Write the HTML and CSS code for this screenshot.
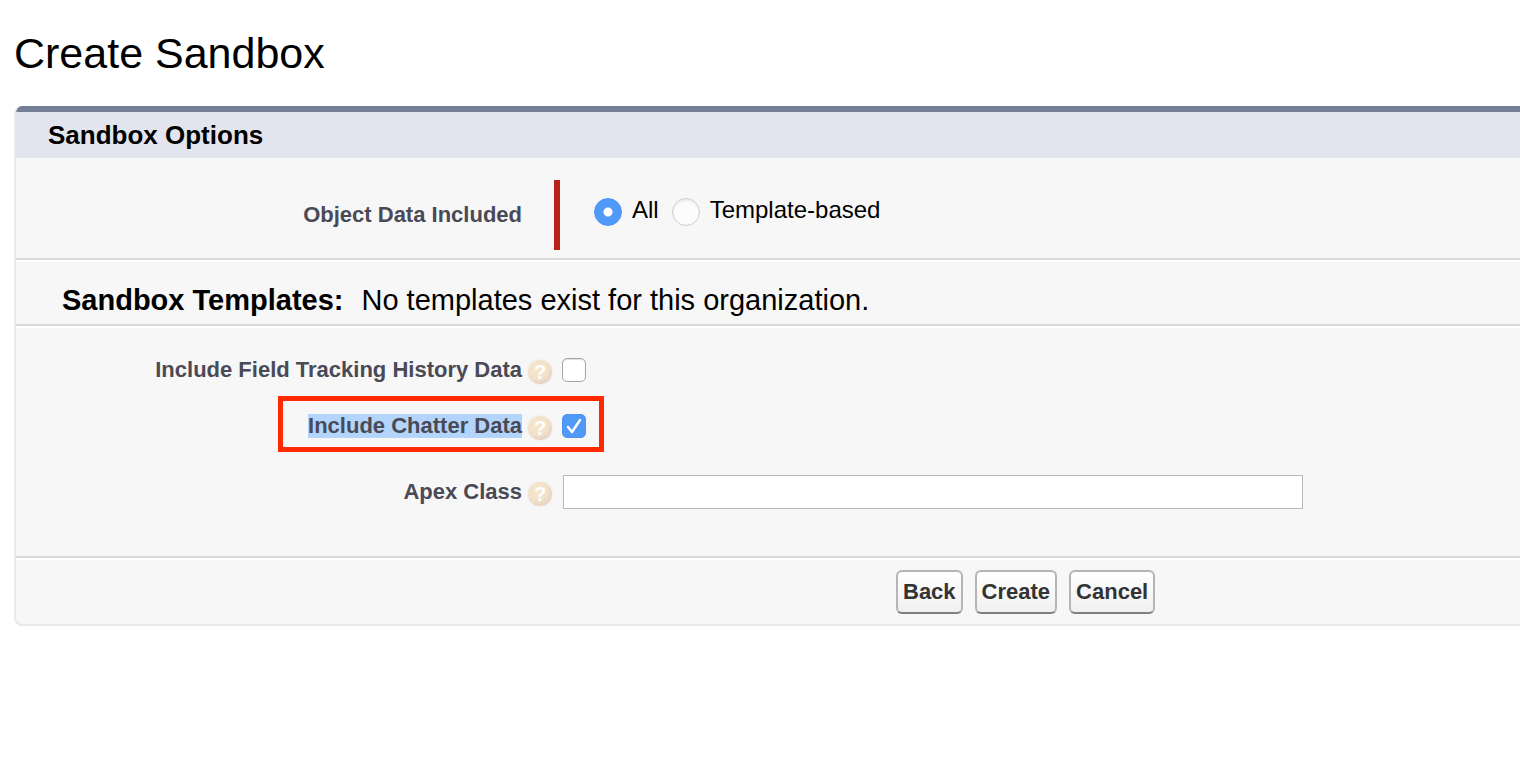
FILE: index.html
```html
<!DOCTYPE html>
<html lang="en">
<head>
<meta charset="utf-8">
<title>Create Sandbox</title>
<link rel="stylesheet" href="styles.css">
</head>
<body>
<main class="page">
  <h1 class="page-title">Create Sandbox</h1>
  <form class="card">
    <h2 class="card-header">Sandbox Options</h2>

    <div class="section object-data" role="radiogroup" aria-labelledby="object-data-label">
      <span class="label" id="object-data-label">Object Data Included</span>
      <div class="required">
        <input class="radio" type="radio" name="data" id="data-all" checked>
        <label class="choice" for="data-all">All</label>
        <input class="radio" type="radio" name="data" id="data-template">
        <label class="choice" for="data-template">Template-based</label>
      </div>
    </div>

    <div class="section templates">
      <h3 class="templates-title">Sandbox Templates:</h3>
      <p class="templates-text">No templates exist for this organization.</p>
    </div>

    <div class="section fields">
      <div class="row">
        <label class="label" for="history">Include Field Tracking History Data</label>
        <button class="help" type="button">?</button>
        <input class="checkbox" type="checkbox" id="history">
      </div>
      <div class="row">
        <label class="label" for="chatter"><mark class="selected">Include Chatter Data</mark></label>
        <button class="help" type="button">?</button>
        <input class="checkbox" type="checkbox" id="chatter" checked>
        <span class="callout"></span>
      </div>
      <div class="row row-apex">
        <label class="label" for="apex">Apex Class</label>
        <button class="help" type="button">?</button>
        <input class="textbox" type="text" id="apex">
      </div>
    </div>

    <div class="actions">
      <button class="btn" type="button">Back</button>
      <button class="btn" type="button">Create</button>
      <button class="btn" type="button">Cancel</button>
    </div>
  </form>
</main>
</body>
</html>
```

FILE: styles.css
```css
* {
  box-sizing: border-box;
}

body {
  margin: 0;
  background: #fff;
  color: #000;
  font-family: "Liberation Sans", Arial, Helvetica, sans-serif;
}

h1, h2, h3, p {
  margin: 0;
}

.page {
  padding: 28px 0 0 14px;
}

.page-title {
  margin-bottom: 28px;
  font-size: 43px;
  font-weight: 400;
  line-height: 50px;
}

.card {
  overflow: hidden;
  border: 2px solid #e9e9e9;
  border-top: 0;
  border-right: 0;
  border-radius: 8px 0 0 8px;
  background: #f7f7f7;
}

.card-header {
  padding: 8px 32px;
  border-top: 6px solid #747e96;
  background: #e3e5ee;
  font-size: 26px;
  line-height: 30px;
}

.section {
  border-bottom: 2px solid #d9d9d9;
  box-shadow: 0 2px 0 #fff;
}

.label {
  width: 506px;
  flex: none;
  color: #4a4a56;
  font-size: 22px;
  font-weight: 700;
  line-height: 24px;
  text-align: right;
}

.object-data {
  display: flex;
  align-items: center;
  gap: 32px;
  padding: 22px 0 8px;
}

.required {
  display: flex;
  align-items: center;
  height: 70px;
  padding: 0 0 6px 34px;
  border-left: 6px solid #ba2119;
}

.choice {
  margin: 0 13px 4px 10px;
  font-size: 24px;
  line-height: 28px;
}

.radio {
  appearance: none;
  width: 28px;
  height: 28px;
  margin: 0;
  border: 1px solid #cfcfcf;
  border-radius: 50%;
  background: #fcfcfc;
  box-shadow: inset 0 2px 2px #ececec;
}

.radio:checked {
  border-color: #4d94f4;
  background: radial-gradient(circle, #fff 0 4px, #5199f7 5px);
  box-shadow: none;
}

.templates {
  display: flex;
  align-items: baseline;
  gap: 18px;
  padding: 23px 46px 7px;
  font-size: 29px;
  line-height: 34px;
}

.templates-title {
  font-size: 29px;
}

.fields {
  display: flex;
  flex-direction: column;
  gap: 32px;
  padding: 32px 0 47px;
}

.row {
  position: relative;
  display: flex;
  align-items: center;
  height: 24px;
}

.row-apex {
  height: 34px;
  margin-top: 5px;
}

.selected {
  display: inline-block;
  background: #b4d5fb;
  color: inherit;
}

.help {
  width: 24px;
  height: 24px;
  flex: none;
  margin: 4px 10px 0 6px;
  padding: 0;
  border: 0;
  border-radius: 50%;
  background: radial-gradient(circle at 42% 38%, #f6e7ca 0, #f2e2cb 45%, #e6d3c0 75%, #d9c4b4 100%);
  box-shadow: 0 0 2px #e6dace;
  color: #fff;
  font: 700 20px/24px "Liberation Sans", Arial, sans-serif;
}

.checkbox {
  appearance: none;
  width: 24px;
  height: 24px;
  margin: 0;
  border: 1px solid #a6a6a6;
  border-radius: 5px;
  background: #fff;
  box-shadow: inset 0 1px 1px #ddd;
}

.checkbox:checked {
  border-color: #4d94f4;
  background: #5199f7 url("data:image/svg+xml,%3Csvg xmlns='http://www.w3.org/2000/svg' viewBox='0 0 22 22'%3E%3Cpath d='M5 12l4 5 8-12' fill='none' stroke='white' stroke-width='2.5' stroke-linecap='round' stroke-linejoin='round'/%3E%3C/svg%3E") center / 22px 22px no-repeat;
  box-shadow: none;
}

.callout {
  position: absolute;
  top: -18px;
  left: 262px;
  width: 326px;
  height: 56px;
  border: 5px solid #ff2a00;
  pointer-events: none;
}

.textbox {
  width: 740px;
  height: 34px;
  margin: 0 0 0 1px;
  padding: 2px 6px;
  border: 1px solid #b9b9b9;
  border-radius: 0;
  background: #fff;
  font: 22px "Liberation Sans", Arial, sans-serif;
}

.actions {
  display: flex;
  gap: 12px;
  padding: 12px 0 10px 880px;
}

.btn {
  height: 44px;
  padding: 0 5px;
  border: 2px solid #b5b5b5;
  border-bottom-color: #7f7f7f;
  border-radius: 6px;
  background: linear-gradient(#fff, #f0f0f0);
  color: #333;
  font: 700 22px/28px "Liberation Sans", Arial, sans-serif;
}
```
